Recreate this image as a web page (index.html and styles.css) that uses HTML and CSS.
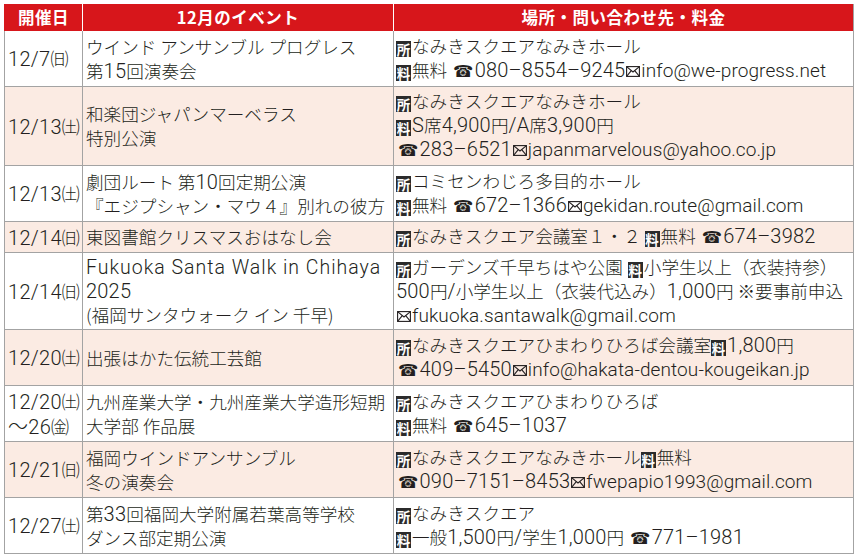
FILE: index.html
```html
<!DOCTYPE html>
<html lang="ja">
<head>
<meta charset="utf-8">
<title>12月のイベント</title>
<link rel="stylesheet" href="styles.css">
</head>
<body>
<table class="events">
  <colgroup>
    <col class="c-date">
    <col class="c-event">
    <col class="c-info">
  </colgroup>
  <thead>
    <tr><th>開催日</th><th>12月のイベント</th><th>場所・問い合わせ先・料金</th></tr>
  </thead>
  <tbody>
    <tr class="two">
      <td class="date">12/7<span class="dw">㈰</span></td>
      <td class="event">ウインド アンサンブル プログレス<br>第<span class="en">15</span>回演奏会</td>
      <td class="info"><span class="tag">所</span>なみきスクエアなみきホール<br><span class="tag">料</span>無料 <span class="tel">☎</span><span class="en">080–8554–9245</span><svg class="mail" viewBox="0 0 14 11"><rect x="0.6" y="0.6" width="12.8" height="9.8"/><polyline points="0.6,0.6 7,6 13.4,0.6"/><line x1="0.6" y1="10.4" x2="5.3" y2="4.6"/><line x1="13.4" y1="10.4" x2="8.7" y2="4.6"/></svg><span class="addr">info@we-progress.net</span></td>
    </tr>
    <tr class="alt">
      <td class="date">12/13<span class="dw">㈯</span></td>
      <td class="event">和楽団ジャパンマーベラス<br>特別公演</td>
      <td class="info"><span class="tag">所</span>なみきスクエアなみきホール<br><span class="tag">料</span><span class="en">S</span>席<span class="en">4,900</span>円<span class="en">/A</span>席<span class="en">3,900</span>円<br><span class="tel">☎</span><span class="en">283–6521</span><svg class="mail" viewBox="0 0 14 11"><rect x="0.6" y="0.6" width="12.8" height="9.8"/><polyline points="0.6,0.6 7,6 13.4,0.6"/><line x1="0.6" y1="10.4" x2="5.3" y2="4.6"/><line x1="13.4" y1="10.4" x2="8.7" y2="4.6"/></svg><span class="addr">japanmarvelous@yahoo.co.jp</span></td>
    </tr>
    <tr class="two">
      <td class="date">12/13<span class="dw">㈯</span></td>
      <td class="event">劇団ルート 第<span class="en">10</span>回定期公演<br>『エジプシャン・マウ４』別れの彼方</td>
      <td class="info"><span class="tag">所</span>コミセンわじろ多目的ホール<br><span class="tag">料</span>無料 <span class="tel">☎</span><span class="en">672–1366</span><svg class="mail" viewBox="0 0 14 11"><rect x="0.6" y="0.6" width="12.8" height="9.8"/><polyline points="0.6,0.6 7,6 13.4,0.6"/><line x1="0.6" y1="10.4" x2="5.3" y2="4.6"/><line x1="13.4" y1="10.4" x2="8.7" y2="4.6"/></svg><span class="addr">gekidan.route@gmail.com</span></td>
    </tr>
    <tr class="alt">
      <td class="date">12/14<span class="dw">㈰</span></td>
      <td class="event">東図書館クリスマスおはなし会</td>
      <td class="info"><span class="tag">所</span>なみきスクエア会議室１・２ <span class="tag">料</span>無料 <span class="tel">☎</span><span class="en">674–3982</span></td>
    </tr>
    <tr>
      <td class="date">12/14<span class="dw">㈰</span></td>
      <td class="event"><span class="en latin">Fukuoka Santa Walk in Chihaya</span><br><span class="en">2025</span><br>(福岡サンタウォーク イン 千早)</td>
      <td class="info"><span class="tag">所</span>ガーデンズ千早ちはや公園<span class="tag gap">料</span>小学生以上（衣装持参）<br><span class="en">500</span>円<span class="en">/</span>小学生以上（衣装代込み）<span class="en">1,000</span>円 ※要事前申込<br><svg class="mail" viewBox="0 0 14 11"><rect x="0.6" y="0.6" width="12.8" height="9.8"/><polyline points="0.6,0.6 7,6 13.4,0.6"/><line x1="0.6" y1="10.4" x2="5.3" y2="4.6"/><line x1="13.4" y1="10.4" x2="8.7" y2="4.6"/></svg><span class="addr">fukuoka.santawalk@gmail.com</span></td>
    </tr>
    <tr class="alt two">
      <td class="date">12/20<span class="dw">㈯</span></td>
      <td class="event">出張はかた伝統工芸館</td>
      <td class="info"><span class="tag">所</span>なみきスクエアひまわりひろば会議室<span class="tag">料</span><span class="en">1,800</span>円<br><span class="tel">☎</span><span class="en">409–5450</span><svg class="mail" viewBox="0 0 14 11"><rect x="0.6" y="0.6" width="12.8" height="9.8"/><polyline points="0.6,0.6 7,6 13.4,0.6"/><line x1="0.6" y1="10.4" x2="5.3" y2="4.6"/><line x1="13.4" y1="10.4" x2="8.7" y2="4.6"/></svg><span class="addr">info@hakata-dentou-kougeikan.jp</span></td>
    </tr>
    <tr class="two">
      <td class="date">12/20<span class="dw">㈯</span><br>～26<span class="dw">㈮</span></td>
      <td class="event">九州産業大学・九州産業大学造形短期<br>大学部 作品展</td>
      <td class="info"><span class="tag">所</span>なみきスクエアひまわりひろば<br><span class="tag">料</span>無料 <span class="tel">☎</span><span class="en">645–1037</span></td>
    </tr>
    <tr class="alt two">
      <td class="date">12/21<span class="dw">㈰</span></td>
      <td class="event">福岡ウインドアンサンブル<br>冬の演奏会</td>
      <td class="info"><span class="tag">所</span>なみきスクエアなみきホール<span class="tag">料</span>無料<br><span class="tel">☎</span><span class="en">090–7151–8453</span><svg class="mail" viewBox="0 0 14 11"><rect x="0.6" y="0.6" width="12.8" height="9.8"/><polyline points="0.6,0.6 7,6 13.4,0.6"/><line x1="0.6" y1="10.4" x2="5.3" y2="4.6"/><line x1="13.4" y1="10.4" x2="8.7" y2="4.6"/></svg><span class="addr">fwepapio1993@gmail.com</span></td>
    </tr>
    <tr class="two">
      <td class="date">12/27<span class="dw">㈯</span></td>
      <td class="event">第<span class="en">33</span>回福岡大学附属若葉高等学校<br>ダンス部定期公演</td>
      <td class="info"><span class="tag">所</span>なみきスクエア<br><span class="tag">料</span>一般<span class="en">1,500</span>円<span class="en">/</span>学生<span class="en">1,000</span>円 <span class="tel">☎</span><span class="en">771–1981</span></td>
    </tr>
  </tbody>
</table>
</body>
</html>
```

FILE: styles.css
```css
html, body {
  background: #ffffff;
}
body {
  margin: 4px 0 0 4px;
  font-family: "Noto Sans CJK JP", sans-serif;
  color: #231f20;
}
.events {
  border-collapse: separate;
  border-spacing: 0;
  table-layout: fixed;
  width: 850px;
}
.c-date { width: 79px; }
.c-event { width: 311px; }
.c-info { width: 460px; }

.events th {
  background: #d7161b;
  color: #ffffff;
  font-weight: 700;
  font-size: 16.5px;
  height: 27px;
  line-height: 27px;
  padding: 0;
  border-right: 1px solid #ffffff;
  text-align: center;
  letter-spacing: 0.5px;
}
.events th:first-child { border-left: 1px solid #d7161b; }
.events th:last-child { border-right: 1px solid #a3a3a3; }

.events td {
  border-right: 1px solid #a3a3a3;
  border-bottom: 1px solid #a3a3a3;
  padding: 2px 0 2px 3px;
  vertical-align: middle;
  font-size: 17.6px;
  font-weight: 300;
  line-height: 24px;
  white-space: nowrap;
}
.events td:first-child { border-left: 1px solid #a3a3a3; }
.events tr.two td { height: 51px; }
.events tr.alt td { background: #fbebe3; }

.en, .addr {
  font-family: "Roboto", "Noto Sans CJK JP", sans-serif;
  font-weight: 300;
  line-height: 1;
}
.en {
  font-size: 20px;
  letter-spacing: 0.2px;
}
.addr {
  font-size: 19px;
  letter-spacing: 0.1px;
}
.latin {
  font-size: 19.5px;
  letter-spacing: 1px;
}

.events td.date {
  font-family: "Roboto", "Noto Sans CJK JP", sans-serif;
  font-size: 20px;
  letter-spacing: 0.3px;
  padding-left: 3px;
}
.dw {
  font-family: "Noto Sans CJK JP", sans-serif;
  font-size: 18px;
  letter-spacing: 0;
}
.events td.info { padding-left: 2px; }

.tag {
  display: inline-block;
  width: 15px;
  height: 16px;
  background: #2b2b2b;
  color: #ffffff;
  font-size: 13.5px;
  line-height: 16px;
  text-align: center;
  font-weight: 700;
  vertical-align: -2px;
  margin-right: 1px;
}
.tag.gap { margin-left: 5px; }
.tel {
  font-family: "DejaVu Sans", sans-serif;
  font-weight: 400;
  font-size: 16.5px;
  margin: 0 1px 0 2px;
}
.mail {
  display: inline-block;
  width: 14px;
  height: 11px;
  margin: 0 1px;
  vertical-align: 0;
  fill: none;
  stroke: #231f20;
  stroke-width: 1.1;
}
```
